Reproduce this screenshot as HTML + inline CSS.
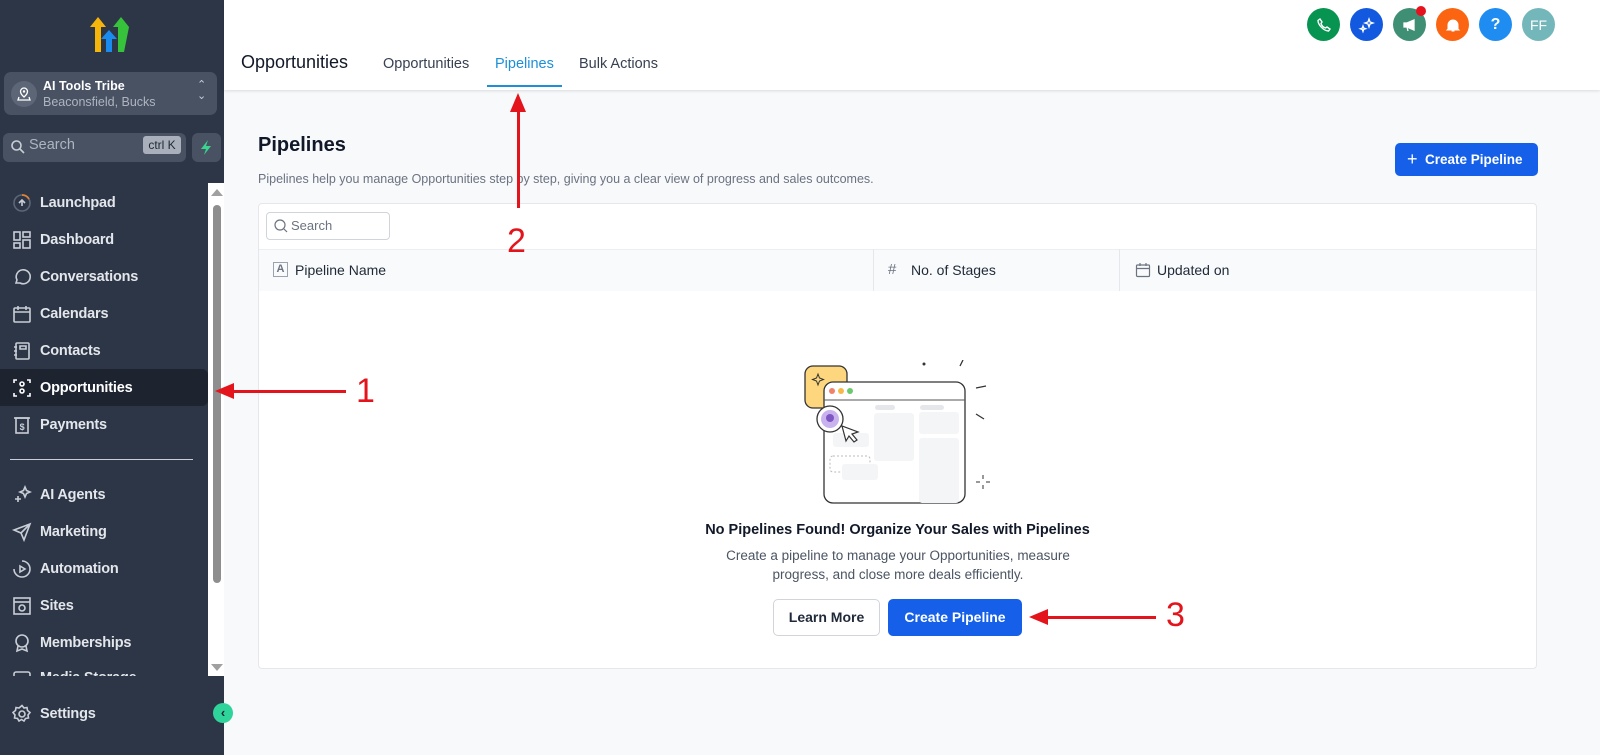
<!DOCTYPE html>
<html><head><meta charset="utf-8"><style>
*{box-sizing:border-box;margin:0;padding:0}
body{width:1600px;height:755px;overflow:hidden;font-family:"Liberation Sans",sans-serif;background:#f8f9fb;position:relative}
.a{position:absolute}
#sb{left:0;top:0;width:224px;height:755px;background:#2d3647}
.nav{position:absolute;left:0;width:208px;height:37px;display:flex;align-items:center;color:#e3e6ea;font-size:14.5px;font-weight:bold;letter-spacing:-0.2px}
.nav svg{position:absolute;left:12px;width:20px;height:20px}
.nav span{position:absolute;left:40px}
.ic{stroke:#c9ced6;fill:none;stroke-width:1.6}
.circ{position:absolute;top:8px;width:33px;height:33px;border-radius:50%;display:flex;align-items:center;justify-content:center;color:#fff;font-weight:bold;font-size:15px}
.tab{position:absolute;top:56px;font-size:14.5px;color:#374151}
.th{position:absolute;top:262px;font-size:14px;color:#1f2937}
.red{background:#e3141b}
</style></head><body>
<div id="sb" class="a">
 <svg class="a" style="left:88px;top:14px" width="46" height="40" viewBox="0 0 46 40">
  <polygon points="2,13 10,3 18,13 13,13 13,38 7,38 7,13" fill="#f5b50a"/>
  <polygon points="25,13 33,3 41,13 36,38 30,38 30,13" fill="#37c23c"/>
  <polygon points="30,13 36,13 36,38 30,38" fill="#37c23c"/>
  <polygon points="13,25 21,16 29,25 24,25 24,38 18,38 18,25" fill="#1a8cf0"/>
 </svg>
 <div class="a" style="left:4px;top:72px;width:213px;height:43px;background:#485263;border-radius:7px"></div>
 <div class="a" style="left:11px;top:81px;width:26px;height:26px;border-radius:50%;background:#5d6677"></div>
 <svg class="a" style="left:16px;top:86px" width="16" height="16" viewBox="0 0 16 16"><path d="M8 2a3.5 3.5 0 0 1 3.5 3.5C11.5 8 8 11 8 11S4.5 8 4.5 5.5A3.5 3.5 0 0 1 8 2zM3 11l-1 3h12l-1-3" stroke="#fff" fill="none" stroke-width="1.3"/><circle cx="8" cy="5.5" r="1.2" fill="#fff"/></svg>
 <div class="a" style="left:43px;top:79px;color:#fff;font-weight:bold;font-size:12.5px">AI Tools Tribe</div>
 <div class="a" style="left:43px;top:95px;color:#aeb5c0;font-size:12.5px">Beaconsfield, Bucks</div>
 <div class="a" style="left:197px;top:80px;color:#c9ced6;font-size:11px;line-height:11px">&#8963;<br>&#8964;</div>
 <div class="a" style="left:3px;top:133px;width:183px;height:29px;background:#485263;border-radius:6px"></div>
 <svg class="a" style="left:10px;top:139px" width="16" height="16" viewBox="0 0 16 16"><circle cx="6.5" cy="6.5" r="4.5" class="ic"/><path d="M10 10l4 4" class="ic"/></svg>
 <div class="a" style="left:29px;top:137px;color:#aeb5c0;font-size:14.5px">Search</div>
 <div class="a" style="left:143px;top:136px;width:38px;height:18px;background:#a9b0bb;border-radius:3px;color:#1f2937;font-size:12px;text-align:center;line-height:18px">ctrl K</div>
 <div class="a" style="left:192px;top:133px;width:29px;height:29px;background:#485263;border-radius:6px"></div>
 <svg class="a" style="left:198px;top:139px" width="16" height="17" viewBox="0 0 16 17"><path d="M10 1L3 10h5l-2 6 7-9H8z" fill="#3bd48f"/></svg>

 <div class="nav" style="top:184px"><svg viewBox="0 0 20 20"><circle cx="10" cy="10" r="8" stroke="#5d6677" stroke-width="1.6" fill="none"/><path d="M10 2a8 8 0 0 1 7 4" stroke="#e0813a" stroke-width="1.8" fill="none"/><path d="M7 10l3-3 3 3M10 7v6" class="ic"/></svg><span>Launchpad</span></div>
 <div class="nav" style="top:221px"><svg viewBox="0 0 20 20"><rect x="2" y="2" width="6" height="8" class="ic"/><rect x="11" y="2" width="7" height="5" class="ic"/><rect x="2" y="13" width="6" height="5" class="ic"/><rect x="11" y="10" width="7" height="8" class="ic"/></svg><span>Dashboard</span></div>
 <div class="nav" style="top:258px"><svg viewBox="0 0 20 20"><path d="M4 16l1-3a7 7 0 1 1 3 3z" class="ic"/></svg><span>Conversations</span></div>
 <div class="nav" style="top:295px"><svg viewBox="0 0 20 20"><rect x="2" y="4" width="16" height="14" rx="1" class="ic"/><path d="M2 8h16M6 2v4M14 2v4" class="ic"/></svg><span>Calendars</span></div>
 <div class="nav" style="top:332px"><svg viewBox="0 0 20 20"><rect x="4" y="2" width="13" height="16" rx="1" class="ic"/><path d="M2 6h3M2 10h3M2 14h3M8 5h6v3H8z" class="ic"/></svg><span>Contacts</span></div>
 <div class="nav" style="top:369px;background:#1d232f;color:#fff;border-radius:0 6px 6px 0"><svg viewBox="0 0 20 20"><path d="M2 5V2h3M15 2h3v3M2 15v3h3M18 15v3h-3" stroke="#fff" stroke-width="1.6" fill="none"/><circle cx="10" cy="6" r="2" stroke="#fff" fill="none" stroke-width="1.6"/><circle cx="10" cy="13" r="2" stroke="#fff" fill="none" stroke-width="1.6"/></svg><span>Opportunities</span></div>
 <div class="nav" style="top:406px"><svg viewBox="0 0 20 20"><rect x="4" y="3" width="12" height="15" class="ic"/><path d="M2 3h16" class="ic"/><text x="10" y="15" font-size="9" fill="#c9ced6" text-anchor="middle" font-family="Liberation Sans">$</text></svg><span>Payments</span></div>
 <div class="a" style="left:10px;top:459px;width:183px;height:1px;background:#c9ced6"></div>
 <div class="nav" style="top:476px"><svg viewBox="0 0 20 20"><path d="M3 14h6M6 11v6M13 2l1.5 3.5L18 7l-3.5 1.5L13 12l-1.5-3.5L8 7l3.5-1.5z" class="ic"/></svg><span>AI Agents</span></div>
 <div class="nav" style="top:513px"><svg viewBox="0 0 20 20"><path d="M2 8l16-6-6 16-3-7z M9 11l9-9" class="ic"/></svg><span>Marketing</span></div>
 <div class="nav" style="top:550px"><svg viewBox="0 0 20 20"><path d="M10 2a8 8 0 1 1-8 8" class="ic"/><path d="M8 7v6l5-3z" class="ic"/></svg><span>Automation</span></div>
 <div class="nav" style="top:587px"><svg viewBox="0 0 20 20"><rect x="2" y="2" width="16" height="16" class="ic"/><path d="M2 6h16" class="ic"/><circle cx="10" cy="12" r="3" class="ic"/></svg><span>Sites</span></div>
 <div class="nav" style="top:624px"><svg viewBox="0 0 20 20"><circle cx="10" cy="8" r="6" class="ic"/><path d="M6 13l-1 5 5-2 5 2-1-5" class="ic"/></svg><span>Memberships</span></div>
 <div class="nav" style="top:662px;height:14px;overflow:hidden;align-items:flex-start"><svg viewBox="0 0 20 20" style="top:8px"><rect x="2" y="2" width="16" height="16" rx="2" class="ic"/></svg><span style="top:8px">Media Storage</span></div>
 <div class="a" style="left:0;top:676px;width:208px;height:18px;background:#2d3647"></div>
 <div class="nav" style="top:695px"><svg viewBox="0 0 20 20"><circle cx="10" cy="10" r="3" class="ic"/><path d="M10 1.5l2 2.5 3-.5.5 3 2.5 2-2 2.5.5 3-3 .5-1.5 2.5-2.5-1.5-2.5 1.5-1.5-2.5-3-.5.5-3-2-2.5 2.5-2 .5-3 3 .5z" class="ic"/></svg><span>Settings</span></div>
 <div class="a" style="left:208px;top:183px;width:16px;height:493px;background:#fff"></div>
 <div class="a" style="left:213px;top:205px;width:8px;height:378px;background:#8e8e8e;border-radius:4px"></div>
 <div class="a" style="left:211px;top:189px;width:0;height:0;border:6px solid transparent;border-bottom:7px solid #a0a0a0;border-top:none"></div>
 <div class="a" style="left:211px;top:664px;width:0;height:0;border:6px solid transparent;border-top:7px solid #a0a0a0;border-bottom:none"></div>
 <div class="a" style="left:213px;top:703px;width:20px;height:20px;border-radius:50%;background:#2ed49a;color:#1d232f;font-size:13px;text-align:center;line-height:20px;font-weight:bold">&#8249;</div>
</div>

<div class="a" style="left:224px;top:0;width:1376px;height:90px;background:#fff;box-shadow:0 1px 3px rgba(0,0,0,.12)"></div>
<div class="a" style="left:241px;top:52px;font-size:18px;color:#111827">Opportunities</div>
<div class="tab" style="left:383px">Opportunities</div>
<div class="tab" style="left:495px;color:#1c8fd8">Pipelines</div>
<div class="a" style="left:487px;top:85px;width:75px;height:2px;background:#1c8fd8"></div>
<div class="tab" style="left:579px">Bulk Actions</div>

<div class="circ" style="left:1307px;background:#069450"><svg width="16" height="16" viewBox="0 0 16 16"><path d="M4 2l2 3-1 1.5a7 7 0 0 0 4.5 4.5L11 10l3 2-1.5 2C8 14 2 8 2 3.5z" stroke="#fff" fill="none" stroke-width="1.4"/></svg></div>
<div class="circ" style="left:1350px;background:#1259e0"><svg width="18" height="18" viewBox="0 0 18 18"><path d="M11 3l1 3 3 1-3 1-1 3-1-3-3-1 3-1zM5 10l.7 2 2 .7-2 .7L5 15.5l-.7-2-2-.7 2-.7z" stroke="#fff" fill="none" stroke-width="1.3"/></svg></div>
<div class="circ" style="left:1393px;background:#3f8f75"><svg width="16" height="16" viewBox="0 0 16 16"><path d="M2 6h3l7-3v10L5 10H2zM5 10l1 4" stroke="#fff" fill="#fff" stroke-width="1.3"/></svg></div>
<div class="a" style="left:1416px;top:6px;width:10px;height:10px;border-radius:50%;background:#e8111e"></div>
<div class="circ" style="left:1436px;background:#fb6410"><svg width="16" height="16" viewBox="0 0 16 16"><path d="M3 12V8a5 5 0 0 1 10 0v4l1 1H2zM6.5 14h3" fill="#fff" stroke="#fff"/></svg></div>
<div class="circ" style="left:1479px;background:#1e8cf0;font-size:16px">?</div>
<div class="circ" style="left:1522px;background:#74b7ba;font-size:14px;font-weight:normal">FF</div>

<div class="a" style="left:258px;top:134px;font-size:20px;font-weight:bold;color:#111827">Pipelines</div>
<div class="a" style="left:258px;top:172px;font-size:12.5px;color:#6b7280">Pipelines help you manage Opportunities step by step, giving you a clear view of progress and sales outcomes.</div>
<div class="a" style="left:1395px;top:143px;width:143px;height:33px;background:#1660e9;border-radius:5px;color:#fff;font-weight:bold;font-size:13.5px;line-height:33px;padding-left:12px"><span style="font-size:18px;font-weight:normal;vertical-align:-1px">+</span>&nbsp;&nbsp;Create Pipeline</div>

<div class="a" style="left:258px;top:203px;width:1279px;height:466px;background:#fff;border:1px solid #e5e7eb;border-radius:4px"></div>
<div class="a" style="left:266px;top:212px;width:124px;height:28px;border:1px solid #d1d5db;border-radius:4px"></div>
<svg class="a" style="left:274px;top:219px" width="14" height="14" viewBox="0 0 14 14"><circle cx="6" cy="6" r="5" stroke="#6b7280" fill="none" stroke-width="1.2"/><path d="M10 10l3 3" stroke="#6b7280" stroke-width="1.2"/></svg>
<div class="a" style="left:291px;top:218px;font-size:13px;color:#6b7280">Search</div>
<div class="a" style="left:259px;top:249px;width:1277px;height:42px;background:#f9fafb;border-top:1px solid #eceef1"></div>
<div class="a" style="left:873px;top:249px;width:1px;height:42px;background:#e5e7eb"></div>
<div class="a" style="left:1119px;top:249px;width:1px;height:42px;background:#e5e7eb"></div>
<div class="a" style="left:273px;top:262px;width:15px;height:15px;border:1.5px solid #9ca3af;font-size:11px;color:#6b7280;text-align:center;line-height:12px;font-weight:bold">A</div>
<div class="th" style="left:295px">Pipeline Name</div>
<div class="th" style="left:888px;color:#6b7280;font-size:15px;top:261px">#</div>
<div class="th" style="left:911px">No. of Stages</div>
<svg class="a" style="left:1135px;top:262px" width="16" height="16" viewBox="0 0 16 16"><rect x="1.5" y="3" width="13" height="11.5" rx="1" stroke="#6b7280" fill="none" stroke-width="1.2"/><path d="M1.5 6.5h13M5 1v3M11 1v3" stroke="#6b7280" stroke-width="1.2"/></svg>
<div class="th" style="left:1157px">Updated on</div>

<svg class="a" style="left:800px;top:360px" width="200" height="150" viewBox="0 0 200 150">
 <rect x="5" y="6" width="42" height="42" rx="8" fill="#fdd67e" stroke="#333" stroke-width="1.3"/>
 <path d="M18 14l1.5 4 4 1.5-4 1.5-1.5 4-1.5-4-4-1.5 4-1.5z" stroke="#333" fill="none"/>
 <rect x="24" y="22" width="141" height="121" rx="9" fill="#fff" stroke="#333" stroke-width="1.3"/>
 <path d="M24 40h141" stroke="#555"/>
 <circle cx="32" cy="31" r="3" fill="#f0826b"/><circle cx="41" cy="31" r="3" fill="#f5b94a"/><circle cx="50" cy="31" r="3" fill="#6cc86c"/>
 <rect x="75" y="45" width="20" height="5" rx="2.5" fill="#e5e7eb"/><rect x="120" y="45" width="24" height="5" rx="2.5" fill="#e5e7eb"/>
 <rect x="74" y="53" width="40" height="48" rx="3" fill="#f4f5f7"/><rect x="119" y="52" width="40" height="22" rx="3" fill="#f4f5f7"/>
 <rect x="119" y="78" width="40" height="65" rx="3" fill="#f4f5f7"/>
 <rect x="33" y="73" width="36" height="14" rx="3" fill="#f4f5f7"/>
 <rect x="30" y="96" width="40" height="16" rx="3" fill="none" stroke="#bbb" stroke-dasharray="2 2"/>
 <rect x="42" y="104" width="36" height="16" rx="3" fill="#f4f5f7"/>
 <circle cx="30" cy="59" r="13" fill="#fff" stroke="#333" stroke-width="1.3"/><circle cx="30" cy="59" r="9" fill="#c9b3ef"/><circle cx="30" cy="58" r="4" fill="#7e57c2"/>
 <path d="M42 66l4 15 3-5 5 6 3-2-5-6 6-2z" fill="#fff" stroke="#333" stroke-width="1.2"/>
 <circle cx="124" cy="4" r="1.5" fill="#333"/><path d="M160 6l3-6M176 28l10-2M176 54l8 5" stroke="#333" stroke-width="1.3"/>
 <path d="M183 115v4M183 125v4M176 122h4M186 122h4" stroke="#333"/>
</svg>
<div class="a" style="left:0;top:522px;width:1795px;text-align:center;font-size:14.5px;font-weight:bold;color:#111827">No Pipelines Found! Organize Your Sales with Pipelines</div>
<div class="a" style="left:700px;top:546px;width:396px;text-align:center;font-size:13.5px;color:#4b5563;line-height:19px">Create a pipeline to manage your Opportunities, measure progress, and close more deals efficiently.</div>
<div class="a" style="left:773px;top:599px;width:107px;height:37px;border:1px solid #d1d5db;border-radius:5px;background:#fff;text-align:center;line-height:35px;font-size:14px;font-weight:bold;color:#1f2937">Learn More</div>
<div class="a" style="left:888px;top:599px;width:134px;height:37px;border-radius:5px;background:#1660e9;text-align:center;line-height:37px;font-size:14px;font-weight:bold;color:#fff">Create Pipeline</div>

<div class="a red" style="left:232px;top:390px;width:114px;height:3px"></div>
<div class="a" style="left:215px;top:383px;width:0;height:0;border-top:8px solid transparent;border-bottom:8px solid transparent;border-right:19px solid #e3141b"></div>
<div class="a" style="left:356px;top:372px;font-size:34px;color:#e3141b">1</div>
<div class="a red" style="left:517px;top:110px;width:3px;height:98px"></div>
<div class="a" style="left:510px;top:93px;width:0;height:0;border-left:8px solid transparent;border-right:8px solid transparent;border-bottom:19px solid #e3141b"></div>
<div class="a" style="left:507px;top:222px;font-size:34px;color:#e3141b">2</div>
<div class="a red" style="left:1046px;top:616px;width:110px;height:3px"></div>
<div class="a" style="left:1029px;top:609px;width:0;height:0;border-top:8px solid transparent;border-bottom:8px solid transparent;border-right:19px solid #e3141b"></div>
<div class="a" style="left:1166px;top:596px;font-size:34px;color:#e3141b">3</div>
</body></html>
